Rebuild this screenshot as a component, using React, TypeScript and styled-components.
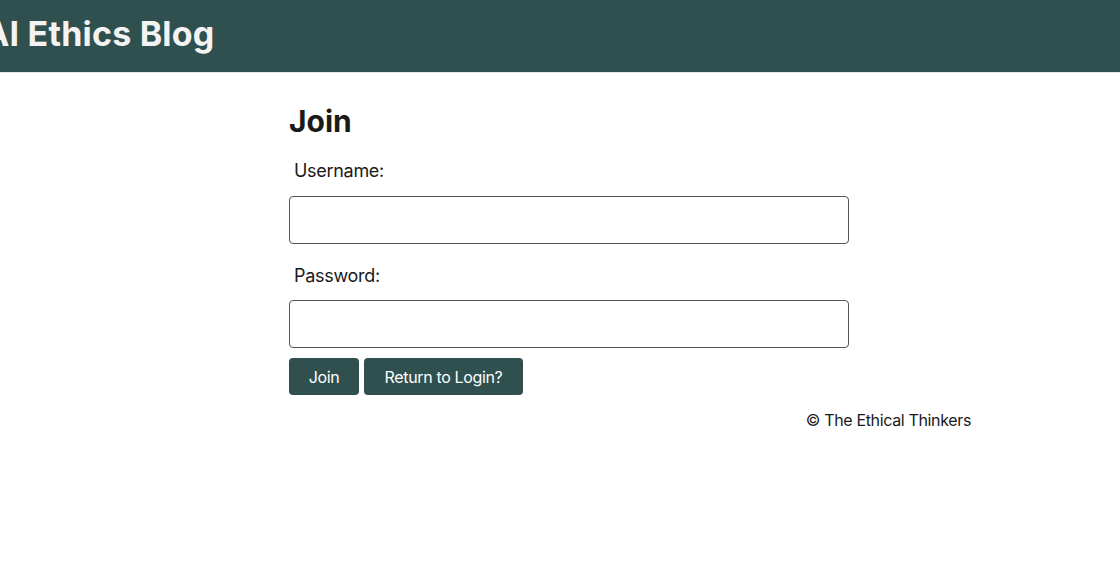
import React from "react";
import styled, { createGlobalStyle } from "styled-components";

const Global = createGlobalStyle`
  html, body { margin: 0; padding: 0; background: #ffffff; }
  body { font-family: Inter, "Noto Sans", sans-serif; color: #1a1a1a; }
  * { box-sizing: border-box; }
`;

const Header = styled.header`
  height: 73px;
  background: #2f504f;
  border-bottom: 1px solid #e4e8e8;
  display: flex;
  align-items: center;
  overflow: hidden;
  padding-bottom: 5px;
`;

const Brand = styled.h1`
  margin: 0 0 0 -16px;
  font-size: 34px;
  font-weight: 700;
  color: #f3f3f3;
  white-space: nowrap;
  letter-spacing: 0.2px;
`;

const Main = styled.main`
  margin-left: 289px;
  width: 682px;
  padding-top: 28px;
`;

const Title = styled.h2`
  margin: 0 0 18px 0;
  font-size: 30px;
  font-weight: 700;
  line-height: 40px;
`;

const Form = styled.form`
  display: flex;
  flex-direction: column;
  width: 560px;
`;

const Label = styled.label<{ $gap?: number }>`
  font-size: 18px;
  line-height: 24px;
  padding-left: 5px;
  margin-bottom: ${(p) => p.$gap ?? 13}px;
  letter-spacing: -0.3px;
`;

const Input = styled.input`
  width: 560px;
  height: 48px;
  border: 1px solid #555555;
  border-radius: 4px;
  margin-bottom: 20px;
  font-size: 16px;
  &:last-of-type { margin-bottom: 10px; }
`;

const Actions = styled.div`
  display: flex;
  gap: 5px;
`;

const Button = styled.button<{ $w: number }>`
  width: ${(p) => p.$w}px;
  height: 37px;
  padding: 0;
  background: #2f504f;
  color: #ffffff;
  border: none;
  border-radius: 4px;
  font-family: Inter, sans-serif;
  font-size: 16px;
  letter-spacing: -0.35px;
  white-space: nowrap;
`;

const Footer = styled.footer`
  text-align: right;
  font-size: 16px;
  margin-top: 15px;
  line-height: 20px;
  letter-spacing: -0.35px;
`;

export default function App() {
  return (
    <>
      <Global />
      <Header>
        <Brand>AI Ethics Blog</Brand>
      </Header>
      <Main>
        <Title>Join</Title>
        <Form>
          <Label>Username:</Label>
          <Input type="text" />
          <Label $gap={12}>Password:</Label>
          <Input type="password" />
          <Actions>
            <Button type="button" $w={70}>Join</Button>
            <Button type="button" $w={159}>Return to Login?</Button>
          </Actions>
        </Form>
        <Footer>© The Ethical Thinkers</Footer>
      </Main>
    </>
  );
}
